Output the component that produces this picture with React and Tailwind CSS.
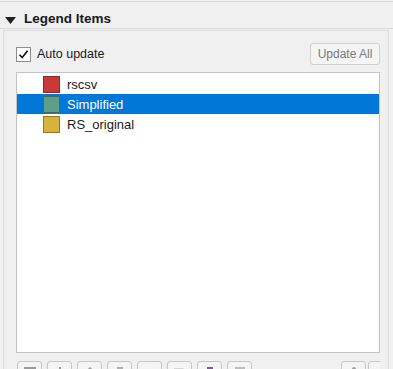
import React from 'react';

const layers = [
  { name: 'rscsv', fill: 'bg-[#c83a3a]', border: 'border-[#8e2a2a]' },
  { name: 'Simplified', fill: 'bg-[#5e9f8a]', border: 'border-[#3f6e60]', selected: true },
  { name: 'RS_original', fill: 'bg-[#d6b43a]', border: 'border-[#8f7a2a]' },
];

const ToolButton = ({ children }) => (
  <div className="w-[25px] h-[22px] shrink-0 rounded-[3px] border border-[#c6c6c6] bg-[#f4f4f4] flex items-start justify-center pt-[5px]">
    {children}
  </div>
);

const App = () => {
  return (
    <div
      className="w-[393px] h-[369px] overflow-hidden bg-[#f0f0f0] text-[#1a1a1a]"
      style={{ fontFamily: '"Liberation Sans", Arial, sans-serif' }}
    >
      {/* Section header */}
      <div className="mt-[1px] h-[28px] border-t border-b border-[#dadada] flex items-start pl-[5px]">
        <svg width="11" height="8" viewBox="0 0 11 8" className="mt-[15px]">
          <path d="M0 0 L11 0 L5.5 7 Z" fill="#222" />
        </svg>
        <span className="ml-[8px] mt-[10px] text-[13.5px] font-bold leading-none">Legend Items</span>
      </div>

      {/* Group frame */}
      <div className="mt-[1px] ml-[3px] mr-[4px] h-[400px] border-t border-l border-r border-[#dcdcdc] pl-[12px] pr-[8px] pt-[12px]">
        <div className="flex items-center justify-between h-[22px]">
          <label className="flex items-center">
            <span className="w-[15px] h-[15px] bg-white border border-[#8f8f8f] flex items-center justify-center">
              <svg width="11" height="11" viewBox="0 0 11 11">
                <path d="M1.5 5.8 L4.2 8.6 L9.6 1.8" fill="none" stroke="#111" strokeWidth="1.6" />
              </svg>
            </span>
            <span className="ml-[6px] text-[12.5px] leading-none">Auto update</span>
          </label>
          <button className="w-[70px] h-[22px] rounded-[3px] border border-[#cfcfcf] bg-[#f5f5f5] text-[12px] text-[#7a7a7a] leading-none">
            Update All
          </button>
        </div>

        {/* Legend list */}
        <div className="mt-[7px] h-[281px] bg-white border border-[#c4c4c4] pt-[1px]">
          {layers.map((l) => (
            <div
              key={l.name}
              className={`h-[20px] flex items-center pl-[26px] ${l.selected ? 'bg-[#0078d7] text-white' : ''}`}
            >
              <span className={`w-[17px] h-[17px] border ${l.fill} ${l.border}`} />
              <span className="ml-[7px] text-[13px] leading-none">{l.name}</span>
            </div>
          ))}
        </div>

        {/* Bottom toolbar */}
        <div className="mt-[8px] flex items-start pl-[1px]">
          <div className="flex gap-[5px]">
            <ToolButton><span className="w-[12px] h-[2px] bg-[#9a9a9a]" /></ToolButton>
            <ToolButton><span className="w-[2px] h-[2px] bg-[#9a9a9a]" /></ToolButton>
            <ToolButton>
              <svg width="10" height="6" viewBox="0 0 10 6"><path d="M0 6 L5 1 L10 6" fill="none" stroke="#a0a0a0" strokeWidth="1.5" /></svg>
            </ToolButton>
            <ToolButton><span className="w-[6px] h-[3px] bg-[#b0b0b0]" /></ToolButton>
            <ToolButton />
            <ToolButton>
              <svg width="14" height="6" viewBox="0 0 14 6"><path d="M1 2 H10 L13 5" fill="none" stroke="#b5b5b5" strokeWidth="1.2" /></svg>
            </ToolButton>
            <ToolButton><span className="w-[6px] h-[3px] bg-[#8a4fa8]" /></ToolButton>
            <ToolButton><span className="w-[10px] h-[2px] bg-[#bdbdbd]" /></ToolButton>
          </div>
          <div className="ml-auto flex gap-[2px] w-[39px] overflow-hidden">
            <ToolButton><span className="w-[4px] h-[3px] rounded-t-full bg-[#a0a0a0]" /></ToolButton>
            <ToolButton />
          </div>
        </div>
      </div>
    </div>
  );
};

export default App;
